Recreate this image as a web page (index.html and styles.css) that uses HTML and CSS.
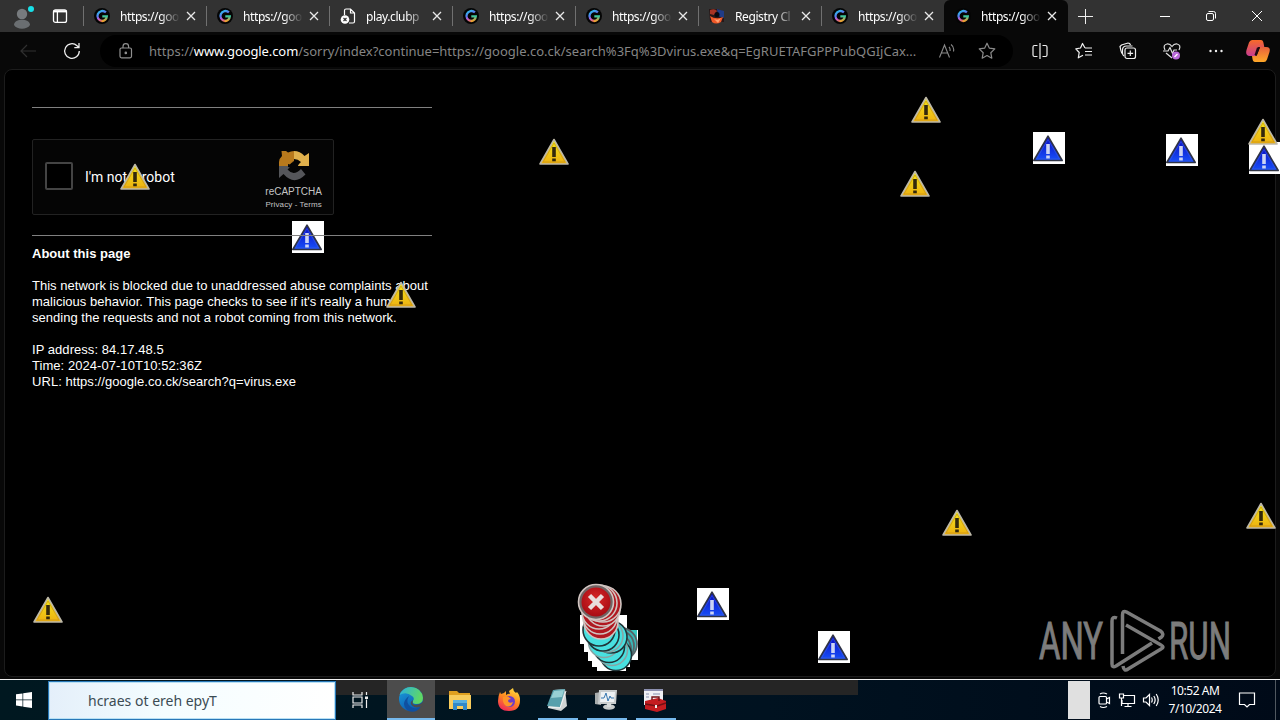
FILE: index.html
```html
<!DOCTYPE html>
<html lang="en">
<head>
    <meta charset="UTF-8">
    <meta name="viewport" content="width=device-width, initial-scale=1.0">
    <title>https://google.co.ck/search?q=virus.exe</title>
    <link rel="stylesheet" href="styles.css">
</head>
<body>
    <!-- shared icons -->
    <svg class="defs" width="0" height="0">
        <defs>
            <linearGradient id="rainbow" x1="0" y1="0" x2="0.5" y2="1">
                <stop offset="0" stop-color="#22c8e8"/>
                <stop offset="0.45" stop-color="#5a7cf0"/>
                <stop offset="0.7" stop-color="#c45ad0"/>
                <stop offset="1" stop-color="#e87a50"/>
            </linearGradient>
            <linearGradient id="rainbow2" x1="0" y1="0" x2="0" y2="1">
                <stop offset="0" stop-color="#3cc7a0"/>
                <stop offset="1" stop-color="#f0a030"/>
            </linearGradient>
            <linearGradient id="gold" x1="0" y1="0" x2="0" y2="1">
                <stop offset="0" stop-color="#f4f010"/>
                <stop offset="0.5" stop-color="#f0cc18"/>
                <stop offset="1" stop-color="#eeb010"/>
            </linearGradient>
            <linearGradient id="blue" x1="0" y1="0" x2="0" y2="1">
                <stop offset="0" stop-color="#0808c0"/>
                <stop offset="1" stop-color="#1850f8"/>
            </linearGradient>
            <radialGradient id="red" cx="0.5" cy="0.4" r="0.6">
                <stop offset="0" stop-color="#d82828"/>
                <stop offset="1" stop-color="#a80c14"/>
            </radialGradient>
            <linearGradient id="edgeBlue" x1="0" y1="0" x2="0.6" y2="1">
                <stop offset="0" stop-color="#1ba0dc"/>
                <stop offset="1" stop-color="#0c58b0"/>
            </linearGradient>
            <linearGradient id="edgeGreen" x1="0" y1="0" x2="1" y2="0.3">
                <stop offset="0" stop-color="#2ab0e0"/>
                <stop offset="1" stop-color="#5fd864"/>
            </linearGradient>
            <linearGradient id="fire" x1="0.8" y1="0" x2="0.3" y2="1">
                <stop offset="0" stop-color="#ffe040"/>
                <stop offset="0.5" stop-color="#ff8a20"/>
                <stop offset="1" stop-color="#f02858"/>
            </linearGradient>
            <linearGradient id="copA" x1="0" y1="0" x2="0" y2="1">
                <stop offset="0" stop-color="#f86a28"/>
                <stop offset="1" stop-color="#c83c90"/>
            </linearGradient>
            <linearGradient id="copB" x1="0" y1="0" x2="0" y2="1">
                <stop offset="0" stop-color="#e8603c"/>
                <stop offset="1" stop-color="#ffa828"/>
            </linearGradient>
        </defs>
        <symbol id="google" viewBox="0 0 16 16">
            <circle cx="8" cy="8" r="8" fill="#050505"/>
            <path d="M11.9 4.4A5 5 0 1 0 8 13" fill="none" stroke="url(#rainbow)" stroke-width="2.3"/>
            <path d="M8 13A5 5 0 0 0 12.8 8.4H8.3" fill="none" stroke="url(#rainbow2)" stroke-width="2.3"/>
        </symbol>
        <symbol id="x" viewBox="0 0 10 10">
            <path d="M1 1l8 8M9 1l-8 8" fill="none" stroke="#e8e8e8" stroke-width="1.3"/>
        </symbol>
        <symbol id="warn" viewBox="0 0 30 28">
            <path d="M15 1.5L29 26H1z" fill="url(#gold)" stroke="#bdb8a8" stroke-width="1.6" stroke-linejoin="round"/>
            <path d="M15 5L26 24H4z" fill="none" stroke="#c89418" stroke-width="0.7"/>
            <path d="M13.2 9h3.6v10h-3.6zM13.2 20.5h3.6v2.8h-3.6z" fill="#33280c"/>
        </symbol>
        <symbol id="info" viewBox="0 0 32 32">
            <path d="M0 0h32v32H0z" fill="#fff"/>
            <path d="M15 4.2L29.2 28.5H.8z" fill="url(#blue)" stroke="#303444" stroke-width="1.6" stroke-linejoin="round"/>
            <path d="M15 7.500L26.500 27H3.500z" fill="none" stroke="#3c60e0" stroke-width="0.6"/>
            <path d="M13.2 12h3.6v10h-3.6zM13.2 23.5h3.6v3h-3.6z" fill="#ccd4f4"/>
        </symbol>
    </svg>

    <header class="tab-bar">
        <div class="tab-tools">
            <svg class="profile" width="24" height="26" viewBox="0 0 24 26">
                <circle cx="10" cy="11" r="5.2" fill="#777b7e"/>
                <path d="M2 22c0-7 16-7 16 0-3 5-13 5-16 0z" fill="#6a6e71"/>
                <circle cx="19" cy="6" r="3" fill="#18e0e8"/>
            </svg>
            <svg width="16" height="16" viewBox="0 0 16 16" fill="none" stroke="#fff" stroke-width="1.3">
                <rect x="1.5" y="1.8" width="13" height="12.6" rx="2"/>
                <path d="M1.5 3.3h13" stroke-width="2.2"/>
                <path d="M5.4 4v10"/>
            </svg>
        </div>
        <div class="tab"><svg class="favicon"><use href="#google"/></svg><span>https://goo</span><svg class="close"><use href="#x"/></svg></div>
        <div class="tab"><svg class="favicon"><use href="#google"/></svg><span>https://goo</span><svg class="close"><use href="#x"/></svg></div>
        <div class="tab">
            <svg class="favicon" viewBox="0 0 16 16">
                <path d="M4.5 7V2.5Q4.5 1 6 1h4.5L14.5 5v8.500Q14.5 15 13 15H9M10.500 1v4h4" fill="none" stroke="#fff" stroke-width="1.2"/>
                <circle cx="5" cy="11.5" r="4.3" fill="#fff"/>
                <path d="M3.5 10l3 3M6.5 10l-3 3" stroke="#333" stroke-width="1.1"/>
            </svg>
            <span>play.clubp</span><svg class="close"><use href="#x"/></svg>
        </div>
        <div class="tab"><svg class="favicon"><use href="#google"/></svg><span>https://goo</span><svg class="close"><use href="#x"/></svg></div>
        <div class="tab"><svg class="favicon"><use href="#google"/></svg><span>https://goo</span><svg class="close"><use href="#x"/></svg></div>
        <div class="tab">
            <svg class="favicon" viewBox="0 0 16 16">
                <path d="M0 1h9l6 3v10H1z" fill="#281818"/>
                <path d="M1 2q5-2 7 1L5 7 1 6z" fill="#a83424"/>
                <path d="M8 1l7 2v7l-6-2z" fill="#203c88"/>
                <path d="M1 8q6 4 13 1l-2 5q-5 3-9 0z" fill="#f05828"/>
                <path d="M5 11q4 2 7-1l-3 5z" fill="#ffa070"/>
                <circle cx="8" cy="6.5" r="2.5" fill="#080810"/>
            </svg>
            <span>Registry Cl</span><svg class="close"><use href="#x"/></svg>
        </div>
        <div class="tab"><svg class="favicon"><use href="#google"/></svg><span>https://goo</span><svg class="close"><use href="#x"/></svg></div>
        <div class="tab active"><svg class="favicon"><use href="#google"/></svg><span>https://goo</span><svg class="close"><use href="#x"/></svg></div>
        <svg class="new-tab" width="15" height="15" viewBox="0 0 15 15" stroke="#eee"><path d="M7.5 0v15M0 7.5h15"/></svg>
        <div class="window-buttons">
            <svg width="10" height="10" viewBox="0 0 10 10" stroke="#fff"><path d="M0 5.5h10"/></svg>
            <svg width="10" height="10" viewBox="0 0 10 10" fill="none" stroke="#fff"><rect x="0.5" y="2.5" width="7" height="7" rx="1.5"/><path d="M2.5.5h5q2 0 2 2v5"/></svg>
            <svg width="10" height="10" viewBox="0 0 10 10" stroke="#fff"><path d="M0 0l10 10M10 0L0 10"/></svg>
        </div>
    </header>

    <nav class="toolbar">
        <svg class="back" width="16" height="14" viewBox="0 0 16 14" fill="none" stroke="#303030" stroke-width="1.2"><path d="M16 7H1M7 1L1 7l6 6"/></svg>
        <svg class="reload" width="18" height="18" viewBox="0 0 18 18" fill="none" stroke="#f0f0f0" stroke-width="1.3"><path d="M16.3 9A7.300 7.300 0 1 1 14 3.700L16 5.500M16 1v4.700h-4.700"/></svg>
        <div class="address">
            <svg class="lock" width="14" height="16" viewBox="0 0 14 16" fill="none" stroke="#909090" stroke-width="1.2"><rect x="1" y="5" width="11.5" height="9.8" rx="1.5"/><path d="M4 5V3.500a2.800 2.800 0 0 1 5.600 0V5"/><circle cx="6.8" cy="9.9" r="0.7" fill="#909090"/></svg>
            <p class="url">https://<b>www.google.com</b>/sorry/index?continue=https://google.co.ck/search%3Fq%3Dvirus.exe&amp;q=EgRUETAFGPPPubQGIjCax...</p>
            <svg class="read" width="16" height="16" viewBox="0 0 16 16" fill="none" stroke="#8a8a8a" stroke-width="1.1"><path d="M.5 14.500L5.500 2l5 12.500M2.500 10h6M10 4q1.500 1.500 1 4M12 1.500q3.500 2.500 2.500 7"/></svg>
            <svg class="star" width="18" height="18" viewBox="0 0 18 18" fill="none" stroke="#8a8a8a" stroke-width="1.2" stroke-linejoin="round"><path d="M9 1.200l2.400 5 5.400.7-4 3.800 1 5.500L9 13.500l-4.800 2.700 1-5.500-4-3.800 5.400-.7z"/></svg>
        </div>
        <div class="actions">
            <svg width="18" height="18" viewBox="0 0 18 18" fill="none" stroke="#f0f0f0" stroke-width="1.2"><path d="M6.500 3.500h-3Q2 3.500 2 5v8q0 1.500 1.500 1.500h3M11.500 3.500h3Q16 3.500 16 5v8q0 1.500-1.500 1.500h-3M9 1v16"/></svg>
            <svg width="18" height="18" viewBox="0 0 18 18" fill="none" stroke="#f0f0f0" stroke-width="1.2" stroke-linejoin="round"><path d="M10 6L7.500 1.500 5.500 6 .8 6.800l3.400 3.700-.9 5.300 4.700-2.500M10 6h7M10 9.500h7M10 13h7"/></svg>
            <svg width="18" height="18" viewBox="0 0 18 18" fill="none" stroke="#f0f0f0" stroke-width="1.2"><path d="M4 12.500Q2.500 11.500 2 9L1 4.500 2.500 3 9 1q2 0 2.500 2M5 14q-1.500-1-1.500-3V8q0-4 4-4h6"/><rect x="6" y="6" width="10.5" height="10.5" rx="2"/><path d="M11.300 8.500v5.600M8.500 11.300h5.600"/></svg>
            <svg width="18" height="18" viewBox="0 0 18 18" fill="none" stroke="#e0e0e0" stroke-width="1.2"><path d="M2 8Q-.5 3 4 2q3-.3 5 2.500Q11 1.700 14 2q4.500 1 2 6M3 11l6 5M0 9h5l2-3.500 2.500 6L11 8h3"/><circle cx="13" cy="13.5" r="4" fill="#b868d8" stroke="none"/><path d="M11.500 15l3-3" stroke="#fff"/></svg>
            <svg width="18" height="18" viewBox="0 0 18 18" fill="#f0f0f0"><circle cx="3.5" cy="9" r="1.2"/><circle cx="9" cy="9" r="1.2"/><circle cx="14.5" cy="9" r="1.2"/></svg>
        </div>
        <svg class="copilot" width="26" height="24" viewBox="0 0 26 24">
            <path d="M7 1h9q2 0 2.500 3l.8 4h-6l-3 9H4Q0 16 1.500 11L4 3.500Q5 1 7 1z" fill="url(#copA)"/>
            <path d="M19 23h-9q-2 0-2.500-3L7 17h4.500l3.500-9h6q5 0 3.500 5L22 20.500Q21 23 19 23z" fill="url(#copB)"/>
            <path d="M12 8.500h3L12 16H9.500z" fill="#200810"/>
        </svg>
    </nav>

    <main class="page">
        <div class="content">
            <hr>
            <div class="captcha">
                <div class="checkbox"></div>
                <span class="label">I'm not a robot</span>
                <div class="brand">
                    <svg width="32" height="32" viewBox="0 0 32 32">
                        <path d="M16 1v11q-3 0-5 4H1v-4Q1.500 8 4 6L3.500 1H8l2 1.500Q13 1 16 1z" fill="#b8791c"/>
                        <path d="M16 1q6 0 10.500 5L31 3v13H19l4-4q-3-3-7-3z" fill="#e0b04c"/>
                        <path d="M1 16h12l-3.500 3.500q6 7 13.500-.5l4.500 5.500Q16 36 5.500 24L1 28z" fill="#55565a"/>
                        <path d="M10 14l4 1 1-4 3 2 3-1-1 4 1 3-4-1-2 4-1-4-4-1z" fill="#050505"/>
                    </svg>
                    <p class="brand-name">reCAPTCHA</p>
                    <p class="brand-links">Privacy - Terms</p>
                </div>
            </div>
            <hr>
            <h1>About this page</h1>
            <p>This network is blocked due to unaddressed abuse complaints about<br>malicious behavior. This page checks to see if it's really a human<br>sending the requests and not a robot coming from this network.</p>
            <p class="details">IP address: 84.17.48.5<br>Time: 2024-07-10T10:52:36Z<br>URL: https://google.co.ck/search?q=virus.exe</p>
        </div>
    </main>

    <footer class="taskbar">
        <div class="start"><svg width="16" height="16" viewBox="0 0 16 16" fill="#fff"><path d="M0 2.300l6.500-.9v6.200H0zM7.200 1.300L16 0v7.600H7.200zM0 8.300h6.500v6.200L0 13.600zM7.200 8.300H16V16l-8.800-1.300z"/></svg></div>
        <div class="search">hcraes ot ereh epyT</div>
        <div class="apps">
            <div class="app"><svg width="18" height="18" viewBox="0 0 18 18" fill="none" stroke="#eee" stroke-width="1.2"><path d="M2 1v3h9V1M2 17v-3h9v3M2 6h9v6H2zM15.500 1v3M15.500 8.500V17"/><path d="M14 5.500h3V8h-3z" fill="#eee" stroke="none"/></svg></div>
            <div class="app selected"><svg width="26" height="26" viewBox="0 0 26 26">
                <circle cx="13" cy="13" r="12" fill="url(#edgeBlue)"/>
                <path d="M1.500 9Q5 1 13 1q11 1 12 11 0 6-7 6-4 0-3-3 2-3-1-5Q8 5 1.500 9z" fill="url(#edgeGreen)"/>
                <path d="M11 10q-4 7 2 11 5 3 10-.5Q17 29 9 24q-7-7 2-14z" fill="#1050a0"/>
                <path d="M15 14q-2 5 3 5 4 0 7-3l-1 4q-6 3-10-.5-3-3 1-5.500z" fill="#4c4c4c"/>
            </svg></div>
            <div class="app"><svg width="24" height="22" viewBox="0 0 24 22">
                <path d="M1 2h8l2 2h11v4H1z" fill="#e0a020"/><path d="M1 6h22v14H1z" fill="#f8cc5c"/>
                <path d="M5 12h14v9h-4v-4H9v4H5z" fill="#3088c8"/><path d="M5 11h14v3H5z" fill="#58b0e0"/>
            </svg></div>
            <div class="app"><svg width="24" height="24" viewBox="0 0 24 24">
                <path d="M3 4l1 2 3-1 2-2v4q3-2 4-1l-1-3 4-3q0 3 3 5l1-1q3 3 3 8 0 11-11 11T1 13q0-5 2-9z" fill="url(#fire)"/>
                <circle cx="12.5" cy="13.5" r="5.5" fill="#6c3cc8"/>
                <path d="M6 9q5-2 8 2-3 0-3 2 1 3 5 1-2 6-7 4-4-3-3-9z" fill="#ff9428"/>
            </svg></div>
            <div class="app running"><svg width="24" height="24" viewBox="0 0 24 24">
                <path d="M9 2l11-1 2 17-6 5-13-3z" fill="#d0d4d4"/><path d="M8 2l12-1-5 18-13-1z" fill="#58a0ac"/><path d="M9 3l10-1-2 7-11 1z" fill="#98d0d4"/><path d="M3 19l12 1 6-17" fill="none" stroke="#f0f4f4"/>
            </svg></div>
            <div class="app running"><svg width="24" height="24" viewBox="0 0 24 24">
                <path d="M1 5l6-1v13l-6-1z" fill="#a8acac"/><path d="M5 2h18l-1 14H4z" fill="#c8cccd"/><path d="M7 4h14l-1 10H6z" fill="#eef2f4"/>
                <path d="M7 10h3l2-5 2 8 2-5 1 2h3" fill="none" stroke="#3878b0"/><ellipse cx="15" cy="19" rx="6" ry="2.8" fill="#c8cccc"/><path d="M13 15h4v4h-4z" fill="#d8dcdc"/>
            </svg></div>
            <div class="app running"><svg width="24" height="24" viewBox="0 0 24 24">
                <path d="M1 1h19v16H1z" fill="#f0f0f4"/><path d="M1 1h19v2H1z" fill="#8c90b0"/><path d="M3 6h3M3 9h3M10 6h7" stroke="#8890b0"/>
                <path d="M2 13l13-3 8 3v8l-9 3-12-3z" fill="#c41c20"/><path d="M9 12V9h7v4M2 16l12 2 9-3" fill="none" stroke="#701014" stroke-width="1.4"/><path d="M12 17h2v3h-2z" fill="#eee"/>
            </svg></div>
        </div>
        <div class="tray-handle"></div>
        <div class="tray">
            <svg width="16" height="18" viewBox="0 0 16 18" fill="none" stroke="#fff" stroke-width="1.2"><rect x="3" y="5.5" width="7.5" height="7.5" rx="1"/><path d="M10.500 8l3-1.500v6l-3-1.500M4 3q3-2 7 0M4 15.500q3 2 7 0"/></svg>
            <svg width="18" height="18" viewBox="0 0 18 18" fill="none" stroke="#fff" stroke-width="1.2"><path d="M6 4.500h10.500v8H4V9M10 12.500v3M6.500 15.500h7M1.500 3h4v4h-4zM3.500 7v8"/></svg>
            <svg width="18" height="18" viewBox="0 0 18 18" fill="none" stroke="#fff" stroke-width="1.2"><path d="M1.500 7H4l3.500-3.500v11L4 11H1.500zM9.500 6.500q1.500 2.500 0 5M11.800 5q2.700 4 0 8M14.200 3q4 6 0 12"/></svg>
        </div>
        <div class="clock">10:52 AM<br>7/10/2024</div>
        <svg class="notes" width="18" height="18" viewBox="0 0 18 18" fill="none" stroke="#fff" stroke-width="1.2"><path d="M1.500 2h15v11.500h-5L9 16l-2.500-2.500h-5z"/></svg>
        <div class="show-desktop"></div>
    </footer>

    <!-- error icons painted over the desktop -->
    <div class="overlay">
        <svg class="warn" style="left: 911px; top: 96px"><use href="#warn"/></svg>
        <svg class="warn" style="left: 539px; top: 138px"><use href="#warn"/></svg>
        <svg class="warn" style="left: 120px; top: 163px"><use href="#warn"/></svg>
        <svg class="warn" style="left: 900px; top: 170px"><use href="#warn"/></svg>
        <svg class="warn" style="left: 386px; top: 281px"><use href="#warn"/></svg>
        <svg class="warn" style="left: 942px; top: 509px"><use href="#warn"/></svg>
        <svg class="warn" style="left: 1246px; top: 502px"><use href="#warn"/></svg>
        <svg class="warn" style="left: 33px; top: 596px"><use href="#warn"/></svg>
        <svg class="info" style="left: 1033px; top: 132px"><use href="#info"/></svg>
        <svg class="info" style="left: 1166px; top: 134px"><use href="#info"/></svg>
        <svg class="info" style="left: 1249px; top: 142px"><use href="#info"/></svg>
        <svg class="info" style="left: 292px; top: 221px"><use href="#info"/></svg>
        <svg class="info" style="left: 697px; top: 588px"><use href="#info"/></svg>
        <svg class="info" style="left: 818px; top: 631px"><use href="#info"/></svg>
        <svg class="warn" style="left: 1248px; top: 118px"><use href="#warn"/></svg>

        <svg class="pile" width="70" height="96" viewBox="0 0 70 96">
            <path d="M5 35h47v15h11v30h-8v7h-4v4H22v-4h-5v-6h-4v-9H9V64H5z" fill="#fff"/>
            <path d="M46 39h6v11h-6z" fill="#fff"/>
            <path d="M50 50h12v14H50z" fill="#38c8c0"/>
            <g fill="#38b8b8" stroke="#586468" stroke-width="1.8">
                <circle cx="46" cy="64" r="16"/><circle cx="43" cy="66" r="16"/><circle cx="40" cy="69" r="16"/>
            </g>
            <g fill="#48e0e0" stroke="#203438" stroke-width="1.6">
                <circle cx="41" cy="75" r="15.500"/><circle cx="37" cy="70" r="15.500" stroke="#88a4a4"/><circle cx="34" cy="67" r="15.500"/><circle cx="29" cy="62" r="15.500" stroke="#88a4a4"/>
                <circle cx="36" cy="57" r="16"/><circle cx="32" cy="56" r="16" stroke="#88a4a4"/><circle cx="28" cy="55" r="16"/><circle cx="24" cy="50" r="16"/>
            </g>
            <g fill="#b01820" stroke="#d0c4c0" stroke-width="1.6">
                <circle cx="26" cy="42" r="17"/><circle cx="25" cy="37" r="17"/><circle cx="24" cy="32" r="17"/><circle cx="28" cy="29" r="17"/>
                <circle cx="28" cy="24" r="18"/><circle cx="24" cy="23" r="18"/>
                <circle cx="21" cy="22" r="17.500" fill="#706464"/><circle cx="21" cy="22" r="14.500" fill="url(#red)" stroke="none"/>
            </g>
            <path d="M14.500 15.500l13 13M27.500 15.500l-13 13" stroke="#e8dedc" stroke-width="4.5"/>
        </svg>

        <svg class="watermark" width="194" height="64" viewBox="0 0 194 64">
            <text x="1" y="50" textLength="64" lengthAdjust="spacingAndGlyphs">ANY</text>
            <text x="131" y="50" textLength="62" lengthAdjust="spacingAndGlyphs">RUN</text>
            <g fill="none" stroke="#7c7c7c" stroke-width="3.5" stroke-linejoin="round">
                <path d="M79 9q-5-2-5 3v43q0 4 4 2l36-23"/>
                <path d="M84.500 45V6q0-5 4-3l34 19q4 3 1 6l-3 2"/>
                <path d="M88 16l35 20q4 2 0 4L90 60q-4 3-5-3"/>
            </g>
        </svg>
        <div class="rule"></div>
    </div>
</body>
</html>
```

FILE: styles.css
```css
* {
    box-sizing: border-box;
}

body {
    display: flex;
    flex-direction: column;
    width: 1280px;
    height: 720px;
    margin: 0;
    overflow: hidden;
    background-color: #080808;
    color: #fff;
    font-family: 'Noto Sans', 'Open Sans', sans-serif;
}

svg {
    display: block;
    flex: none;
}

p, h1 {
    margin: 0;
}

.defs {
    position: absolute;
}

/* tabs */
.tab-bar {
    display: flex;
    align-items: center;
    height: 32px;
    background-color: #323232;
}

.tab-tools {
    display: flex;
    align-items: center;
    gap: 16px;
    width: 83px;
    padding-left: 12px;
}

.tab {
    display: flex;
    align-items: center;
    width: 123px;
    height: 32px;
    font-size: 12px;
    letter-spacing: -0.4px;
}

.tab::before {
    content: "";
    width: 1px;
    height: 20px;
    margin-right: 10px;
    background-color: #707070;
}

.favicon {
    width: 16px;
    height: 16px;
}

.tab span {
    width: 60px;
    margin: 0 6px 0 10px;
    white-space: nowrap;
    -webkit-mask-image: linear-gradient(to right, #000 40px, transparent 60px);
    mask-image: linear-gradient(to right, #000 40px, transparent 60px);
}

.close {
    width: 10px;
    height: 10px;
}

.tab.active {
    width: 124px;
    background-color: #080808;
    border-radius: 6px 6px 0 0;
}

.tab.active::before {
    background-color: transparent;
}

.new-tab {
    margin-left: 10px;
}

.window-buttons {
    display: flex;
    gap: 36px;
    margin-left: auto;
    padding-right: 18px;
}

/* toolbar */
.toolbar {
    display: flex;
    align-items: center;
    height: 37px;
    padding-left: 20px;
    background-color: #080808;
}

.reload {
    margin-left: 27px;
}

.address {
    display: flex;
    align-items: center;
    width: 913px;
    height: 32px;
    margin-left: 19px;
    padding-left: 19px;
    border-radius: 16px;
    background-color: #000;
}

.url {
    width: 772px;
    margin-left: 16px;
    font-size: 13px;
    line-height: 20px;
    white-space: nowrap;
    color: #858585;
}

.url b {
    font-weight: 400;
    letter-spacing: -0.1px;
    color: #fff;
}

.read {
    margin-left: 18px;
}

.star {
    margin-left: 23px;
}

.actions {
    display: flex;
    gap: 26px;
    margin-left: 18px;
}

.copilot {
    margin-left: 20px;
}

/* page */
.page {
    height: 608px;
    margin: 0 4px;
    padding: 37px 27px;
    border: 1px solid #1c1c1c;
    border-radius: 8px;
    background-color: #000;
    font-family: 'Liberation Sans', Arial, sans-serif;
    font-size: 13px;
    line-height: 16px;
}

.content {
    width: 400px;
    letter-spacing: 0.02px;
    white-space: nowrap;
}

hr {
    height: 1px;
    margin: 0;
    border: none;
    background-color: #808080;
}

.captcha {
    display: flex;
    align-items: center;
    width: 302px;
    height: 76px;
    margin: 31px 0 20px;
    padding: 0 11px 0 12px;
    border: 1px solid #222;
    border-radius: 2px;
    background-color: #050505;
    letter-spacing: 0;
}

.checkbox {
    width: 28px;
    height: 28px;
    margin-top: -3px;
    border: 2px solid #444;
    border-radius: 2px;
    background-color: #000;
}

.label {
    margin-left: 12px;
    font-family: Roboto, sans-serif;
    font-size: 14px;
}

.brand {
    display: flex;
    flex-direction: column;
    align-items: center;
    margin-top: 6px;
    margin-left: auto;
    color: #c4c4c4;
}

.brand-name {
    margin-top: 4px;
    font-size: 10px;
    line-height: 12px;
}

.brand-links {
    font-size: 8px;
    line-height: 13px;
    letter-spacing: 0.1px;
}

h1 {
    margin: 10px 0 16px;
    font-size: 13px;
    line-height: 16px;
}

.details {
    margin-top: 16px;
    letter-spacing: 0.05px;
}

/* taskbar */
.taskbar {
    display: flex;
    height: 41px;
    margin-top: 2px;
    border-top: 1px solid #f0f0f0;
    background: linear-gradient(#252525, #252525) 336px 0 / 522px 15px no-repeat,
        linear-gradient(to right, #001820, #001220 60%, #000a18);
}

.start {
    display: flex;
    align-items: center;
    justify-content: center;
    width: 48px;
}

.search {
    width: 288px;
    height: 39px;
    margin-top: 1px;
    padding-left: 39px;
    border: 1px solid #2878b8;
    outline: 1px solid #b8e0f4;
    outline-offset: -2px;
    background: linear-gradient(to right, #e4effa, #f4fdff 40%, #fff);
    font-size: 14px;
    line-height: 37px;
    color: #3c4c54;
}

.apps {
    display: flex;
    gap: 1px;
}

.app {
    display: flex;
    align-items: center;
    justify-content: center;
    width: 48px;
    height: 40px;
}

.app:first-child {
    width: 50px;
    padding-right: 2px;
}

.selected {
    background-color: #4c4c4c;
    border-bottom: 2px solid #76b9ed;
}

.running {
    background: linear-gradient(#76b9ed, #76b9ed) 4px 38px / 40px 2px no-repeat;
}

.running svg {
    margin-right: 2px;
}

.tray-handle {
    width: 22px;
    height: 38px;
    margin: 1px 0 0 auto;
    background-color: #e0e0e0;
}

.tray {
    display: flex;
    align-items: center;
    gap: 6px;
    width: 70px;
    padding-left: 6px;
}

.clock {
    width: 70px;
    padding-top: 2px;
    font-size: 12px;
    line-height: 18px;
    letter-spacing: -0.45px;
    text-align: center;
    white-space: nowrap;
}

.notes {
    align-self: center;
    margin-left: 8px;
}

.show-desktop {
    width: 5px;
    margin-left: 19px;
    border-left: 1px solid #505860;
}

/* overlay */
.overlay {
    position: absolute;
    left: 0;
    top: 0;
    width: 1280px;
    height: 720px;
    overflow: hidden;
    pointer-events: none;
}

.overlay svg {
    position: absolute;
}

.warn {
    width: 30px;
    height: 28px;
}

.info {
    width: 32px;
    height: 32px;
}

.pile {
    left: 575px;
    top: 580px;
}

.watermark {
    left: 1038px;
    top: 609px;
}

.watermark text {
    font-family: Roboto, sans-serif;
    font-size: 51px;
    fill: #7c7c7c;
    stroke: #7c7c7c;
    stroke-width: 1;
}

.rule {
    position: absolute;
    left: 292px;
    top: 235px;
    width: 32px;
    height: 1px;
    background-color: #808080;
}
```
